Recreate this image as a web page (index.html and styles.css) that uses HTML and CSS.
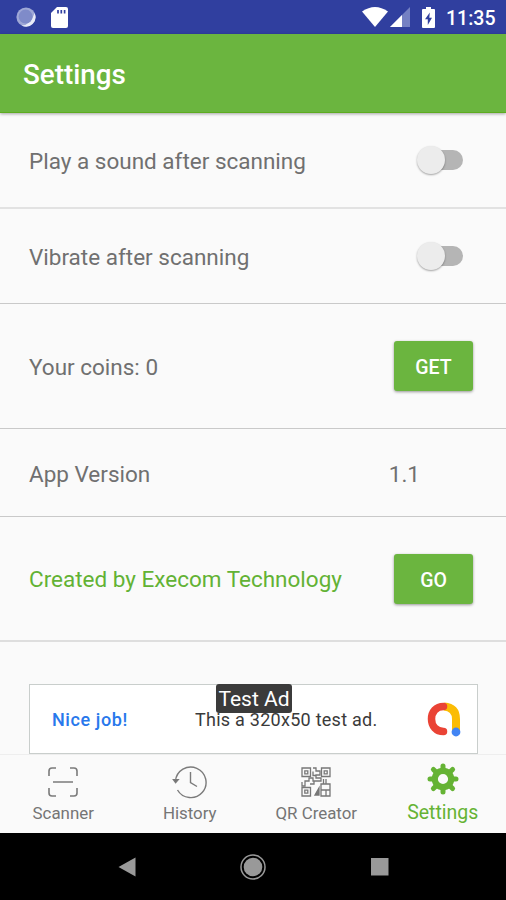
FILE: index.html
```html
<!DOCTYPE html>
<html lang="en">
<head>
<meta charset="utf-8">
<title>Settings</title>
<link rel="stylesheet" href="styles.css">
</head>
<body>
<div class="screen">
  <div class="status">
    <svg class="sync" viewBox="0 0 20 20"><circle cx="10" cy="10" r="9.6" fill="#9fa8d6"/><path d="M18.6 6a9.6 9.6 0 0 1-13 12.6Q15 18 18.6 6z" fill="#e8eaf8"/><circle cx="9.6" cy="9.6" r="7" fill="#7f8bc9"/></svg>
    <svg class="sd" viewBox="0 0 17 21"><path d="M6 0h9a2 2 0 0 1 2 2v17a2 2 0 0 1-2 2H2a2 2 0 0 1-2-2V6z" fill="#fff"/><path d="M7 3v3.500M10.300 3v3.500M13.600 3v3.500" stroke="#303f9f" stroke-width="1.700"/></svg>
    <span class="grow"></span>
    <svg class="wifi" viewBox="0 0 26 20"><path d="M0 4.500Q13-4.500 26 4.500L13 20z" fill="#fff"/></svg>
    <svg class="signal" viewBox="0 0 20 20"><path d="M0 20L20 0V20z" fill="#7480c3"/><path d="M0 20L12 8V20z" fill="#fff"/></svg>
    <svg class="battery" viewBox="0 0 13 21"><path d="M4 0h5v2h3q1 0 1 1v17q0 1-1 1H1q-1 0-1-1V3q0-1 1-1h3z" fill="#fff"/><path d="M7.800 5.500L3 12.300h2.800V18L10 10.800H7.300z" fill="#303f9f"/></svg>
    <span class="time">11:35</span>
  </div>
  <header class="appbar"><h1>Settings</h1></header>
  <main class="content">
    <div class="row sound"><span class="label">Play a sound after scanning</span><span class="switch"></span></div>
    <div class="row vibrate"><span class="label">Vibrate after scanning</span><span class="switch"></span></div>
    <div class="row coins"><span class="label">Your coins: 0</span><button class="btn">GET</button></div>
    <div class="row version"><span class="label">App Version</span><span class="value">1.1</span></div>
    <div class="row created"><span class="label green">Created by Execom Technology</span><button class="btn">GO</button></div>
    <div class="ad">
      <span class="job">Nice job!</span>
      <span class="adtext">This a 320x50 test ad.</span>
      <svg class="admob" viewBox="0 0 36 36" fill="none" stroke-linecap="round"><path d="M18 5.500q12 1 12 12.500v12" stroke="#fbbc04" stroke-width="8" stroke-linecap="butt"/><path d="M17.500 5.500C10 5.500 5.500 11 5.500 18s4.500 12.500 12 12.500" stroke="#ea4335" stroke-width="7.500"/><circle cx="30" cy="31" r="4.400" fill="#4285f4"/></svg>
      <span class="badge">Test Ad</span>
    </div>
  </main>
  <nav class="tabs">
    <div class="tab">
      <svg viewBox="0 0 36 36" fill="none" stroke="#7b7b7b" stroke-width="1.600"><path d="M4 12V7q0-3 3-3h4M25 4h4q3 0 3 3v5M32 24v5q0 3-3 3h-4M11 32H7q-3 0-3-3v-5M8 18h20"/></svg>
      <span>Scanner</span>
    </div>
    <div class="tab">
      <svg viewBox="0 0 36 36" fill="none" stroke="#7b7b7b" stroke-width="1.400"><path d="M3.500 17A15.300 15.300 0 1 1 5.500 26M18.500 8v10.500l6.500 4"/><path d="M1.500 15.800h4.600L3.600 18.600z" fill="#666"/></svg>
      <span>History</span>
    </div>
    <div class="tab">
      <svg viewBox="0 0 36 36" fill="none" stroke="#777" stroke-width="1.300"><path d="M4 4h8.500v8.500H4zM23.500 4H32v8.500h-8.500zM4 23.500h8.500V32H4zM6.800 6.800h3v3h-3zM26.200 6.800h3v3h-3zM6.800 26.200h3v3h-3z"/><path d="M15 4h3v3h4v4h-4v3h5v3h-8v-3h-4v3H7v5H4v-4M15 7.500v4h3M12 20h4v-3M28 15v5h4v6h-4v6h4v-6M28 20h-5v6h9M23 26v6h5M25.500 15v5"/><path d="M17 31h4v-7z" fill="#777"/></svg>
      <span>QR Creator</span>
    </div>
    <div class="tab active">
      <svg viewBox="-18 -18 36 36" fill="none"><circle r="8.200" stroke="#65b334" stroke-width="6.200"/><g stroke="#65b334" stroke-width="5" stroke-linecap="round"><path d="M0-10V-13M0 10V13M-10 0H-13M10 0H13M7.500-7.500L9.600-9.600M-7.500 7.500L-9.600 9.600M7.500 7.500L9.600 9.600M-7.500-7.500L-9.600-9.600"/></g></svg>
      <span>Settings</span>
    </div>
  </nav>
  <div class="system">
    <svg viewBox="0 0 28 28"><path d="M5.500 14L22.500 4.500v19z" fill="#999"/></svg>
    <svg viewBox="0 0 28 28"><circle cx="14" cy="14" r="12" fill="none" stroke="#999" stroke-width="1.500"/><circle cx="14" cy="14" r="9.300" fill="#999"/></svg>
    <svg viewBox="0 0 28 28"><path d="M5 5h17.500v17.500H5z" fill="#999"/></svg>
  </div>
</div>
</body>
</html>
```
FILE: styles.css
```css
* { box-sizing: border-box; }
body { margin: 0; font-family: Roboto, "Liberation Sans", sans-serif; background: #fafafa; }
.screen { width: 506px; height: 900px; display: flex; flex-direction: column; overflow: hidden; }
svg { display: block; flex: none; }
.status { height: 34px; flex: none; background: #303f9f; display: flex; align-items: center; padding: 0 10px 0 16px; color: #fff; }
.sync { width: 20px; height: 20px; }
.sd { width: 17px; height: 21px; margin-left: 15px; }
.grow { flex: 1; }
.wifi { width: 26px; height: 20px; }
.signal { width: 20px; height: 20px; margin-left: 2px; }
.battery { width: 13px; height: 21px; margin-left: 12px; }
.time { width: 50px; margin: 2px 0 0 11px; font-size: 19.5px; font-weight: 500; white-space: nowrap; }
.appbar { height: 79px; flex: none; background: #6bb53f; border-bottom: 1px solid #5dac20; display: flex; align-items: center; padding: 3px 23px 0; box-shadow: 0 1px 3px rgba(0,0,0,.35); z-index: 1; }
h1 { margin: 0; color: #fff; font-size: 27.8px; font-weight: 500; }
.content { height: 641px; flex: none; }
.row { display: flex; align-items: center; justify-content: space-between; padding: 0 33px 0 29px; border-bottom: 1px solid #c9c9c9; color: #707070; font-size: 22.5px; white-space: nowrap; }
.label, .value { padding-top: 1px; }
.sound { height: 96px; border-bottom: 2px solid #e2e2e2; }
.vibrate { height: 95px; }
.coins { height: 125px; }
.version { height: 88px; padding: 1px 86px 0 29px; }
.created { height: 125px; border-bottom: 2px solid #dedede; }
.green { color: #62b234; }
.switch { width: 46px; height: 28px; margin-right: 10px; display: flex; align-items: center; }
.switch::before { content: ""; width: 28px; height: 28px; border-radius: 50%; background: #ececec; box-shadow: 0 1px 2px rgba(0,0,0,.35); z-index: 1; }
.switch::after { content: ""; width: 32px; height: 20px; margin-left: -14px; border-radius: 10px; background: #b5b5b5; }
.btn { width: 79px; height: 50px; border: 0; border-radius: 3px; padding: 3px 0 0; background: #6bb53f; color: #fff; font: 500 19.5px Roboto, sans-serif; box-shadow: 0 1px 3px rgba(0,0,0,.4); }
.ad { position: relative; width: 449px; height: 70px; margin: 42px 0 0 29px; border: 1px solid #c9cecc; background: #fff; display: flex; align-items: center; padding: 0 15px 0 22px; font-size: 18px; white-space: nowrap; }
.job { width: 143px; padding-top: 1px; color: #2878ec; font-weight: 500; letter-spacing: .6px; }
.adtext { flex: 1; padding-top: 1px; color: #3a3a3a; letter-spacing: .26px; }
.admob { width: 36px; height: 36px; }
.badge { position: absolute; left: 186px; top: -1px; width: 76px; height: 29px; border-radius: 3px; background: #3b3b3b; color: #fff; font-size: 21px; line-height: 31px; text-align: center; }
.tabs { height: 79px; flex: none; display: grid; grid-template-columns: repeat(4, 1fr); background: #fafafa; border-top: 1px solid #eee; }
.tab { display: flex; flex-direction: column; align-items: center; padding-top: 9px; color: #757575; font-size: 16.900px; white-space: nowrap; }
.tab svg { width: 36px; height: 36px; }
.tab span { margin-top: 3px; line-height: 20px; }
.active { color: #65b334; font-size: 19.500px; padding-top: 6px; }
.active span { margin-top: 6px; }
.system { height: 67px; flex: none; background: #000; display: grid; grid-template-columns: repeat(3, 126.500px); justify-content: center; justify-items: center; align-items: center; }
.system svg { width: 28px; height: 28px; }
```
